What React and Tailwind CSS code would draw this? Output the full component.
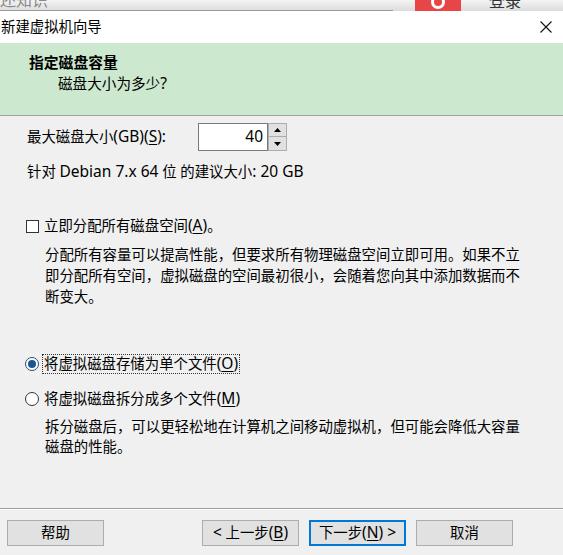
import React from "react";

const FONT = { fontFamily: '"Noto Sans", "Noto Sans CJK SC", sans-serif' };

function U({ children }) {
  return <span className="underline underline-offset-2">{children}</span>;
}

function L({ children }) {
  return <span className="text-[15.5px]">{children}</span>;
}

function Btn({ children, focused, className = "" }) {
  return (
    <div
      className={
        "h-[26px] w-[97px] flex items-center justify-center bg-[#e1e1e1] text-[14.4px] leading-none text-black " +
        (focused ? "border-2 border-[#0078d7] " : "border border-[#adadad] ") +
        className
      }
    >
      {children}
    </div>
  );
}

export default function App() {
  return (
    <div
      className="w-[563px] h-[555px] overflow-hidden bg-[#f0f0f0] flex flex-col text-black"
      style={FONT}
    >
      {/* background app strip */}
      <div className="h-[11px] shrink-0 overflow-hidden bg-gradient-to-b from-[#f4f4f4] to-[#dcdcdc] flex items-start">
        <div className="w-[393px] h-[11px] border-b border-[#9a9a9a] overflow-hidden">
          <div className="text-[16px] leading-none text-[#8a8a8a] mt-[-8px]">还知识</div>
        </div>
        <div className="ml-[22px] w-[46px] h-[11px] bg-[#e84646] flex justify-center overflow-hidden">
          <div className="w-[14px] h-[14px] rounded-full border-[3px] border-white mt-[-5px]"></div>
        </div>
        <div className="ml-[28px] h-[11px] overflow-hidden">
          <div className="text-[16px] leading-none text-[#333] mt-[-7px]">登录</div>
        </div>
      </div>

      {/* title bar */}
      <div className="h-[32px] shrink-0 bg-white flex items-center justify-between">
        <div className="pl-[1px] text-[14.4px] leading-none">新建虚拟机向导</div>
        <svg width="12" height="12" viewBox="0 0 12 12" className="mr-[11px]">
          <path d="M0.5 0.5 L11.5 11.5 M11.5 0.5 L0.5 11.5" stroke="#111" strokeWidth="1.1" fill="none" />
        </svg>
      </div>

      {/* header */}
      <div className="h-[73px] shrink-0 bg-[#cce8cf] border-b border-[#a0a0a0] flex flex-col">
        <div className="pl-[29px] pt-[10px] text-[14.8px] font-bold leading-[18px]">指定磁盘容量</div>
        <div className="pl-[58px] pt-[3px] text-[14.6px] leading-[18px]">
          磁盘大小为多少<L>?</L>
        </div>
      </div>

      {/* body */}
      <div className="flex flex-col text-[14.4px]">
        <div className="mt-[7px] h-[28px] flex items-center">
          <div className="pl-[27px] w-[198px] leading-none">
            最大磁盘大小<L>(GB)(<U>S</U>):</L>
          </div>
          <div className="h-[28px] w-[70px] bg-white border border-[#7a7a7a] flex items-center justify-end pr-[4px] leading-none">
            <L>40</L>
          </div>
          <div className="h-[28px] w-[19px] flex flex-col">
            <div className="h-[14px] bg-[#e1e1e1] border border-[#adadad] flex items-center justify-center">
              <svg width="7" height="4" viewBox="0 0 7 4"><path d="M0 4 L3.5 0 L7 4 Z" fill="#000" /></svg>
            </div>
            <div className="h-[14px] bg-[#e1e1e1] border border-[#adadad] border-t-0 flex items-center justify-center">
              <svg width="7" height="4" viewBox="0 0 7 4"><path d="M0 0 L3.5 4 L7 0 Z" fill="#000" /></svg>
            </div>
          </div>
        </div>

        <div className="mt-[10px] pl-[27px] leading-[20px]">
          针对 <L>Debian 7.x 64</L> 位 的建议大小<L>: 20 GB</L>
        </div>

        <div className="mt-[34px] h-[20px] flex items-center pl-[26px]">
          <div className="w-[13px] h-[13px] bg-white border border-[#333]"></div>
          <div className="ml-[5px] leading-none">
            立即分配所有磁盘空间<L>(<U>A</U>)</L>。
          </div>
        </div>

        <div className="mt-[8px] pl-[45px] pr-[5px] leading-[21px] whitespace-nowrap">
          分配所有容量可以提高性能，但要求所有物理磁盘空间立即可用。如果不立
          <br />
          即分配所有空间，虚拟磁盘的空间最初很小，会随着您向其中添加数据而不
          <br />
          断变大。
        </div>

        <div className="mt-[47px] h-[20px] flex items-center pl-[25px]">
          <div className="w-[14px] h-[14px] rounded-full border border-[#2e4a6b] bg-white flex items-center justify-center">
            <div className="w-[8px] h-[8px] rounded-full bg-[#1b5490]"></div>
          </div>
          <div className="ml-[3px] h-[20px] px-[1px] border border-dotted border-[#333] flex items-center leading-none">
            将虚拟磁盘存储为单个文件<L>(<U>O</U>)</L>
          </div>
        </div>

        <div className="mt-[15px] h-[20px] flex items-center pl-[25px]">
          <div className="w-[14px] h-[14px] rounded-full border border-[#333] bg-white"></div>
          <div className="ml-[5px] leading-none">
            将虚拟磁盘拆分成多个文件<L>(<U>M</U>)</L>
          </div>
        </div>

        <div className="mt-[8px] pl-[45px] pr-[5px] leading-[20px] whitespace-nowrap">
          拆分磁盘后，可以更轻松地在计算机之间移动虚拟机，但可能会降低大容量
          <br />
          磁盘的性能。
        </div>
      </div>

      {/* footer */}
      <div className="mt-auto flex flex-col pb-[9px]">
        <div className="h-[2px] border-t border-[#a0a0a0] border-b border-b-white"></div>
        <div className="mt-[10px] flex items-center">
          <Btn className="ml-[7px]">帮助</Btn>
          <Btn className="ml-[98px]"><L>&lt;</L>&nbsp;上一步<L>(<U>B</U>)</L></Btn>
          <Btn focused className="ml-[10px]">下一步<L>(<U>N</U>) &gt;</L></Btn>
          <Btn className="ml-[10px]">取消</Btn>
        </div>
      </div>
    </div>
  );
}
